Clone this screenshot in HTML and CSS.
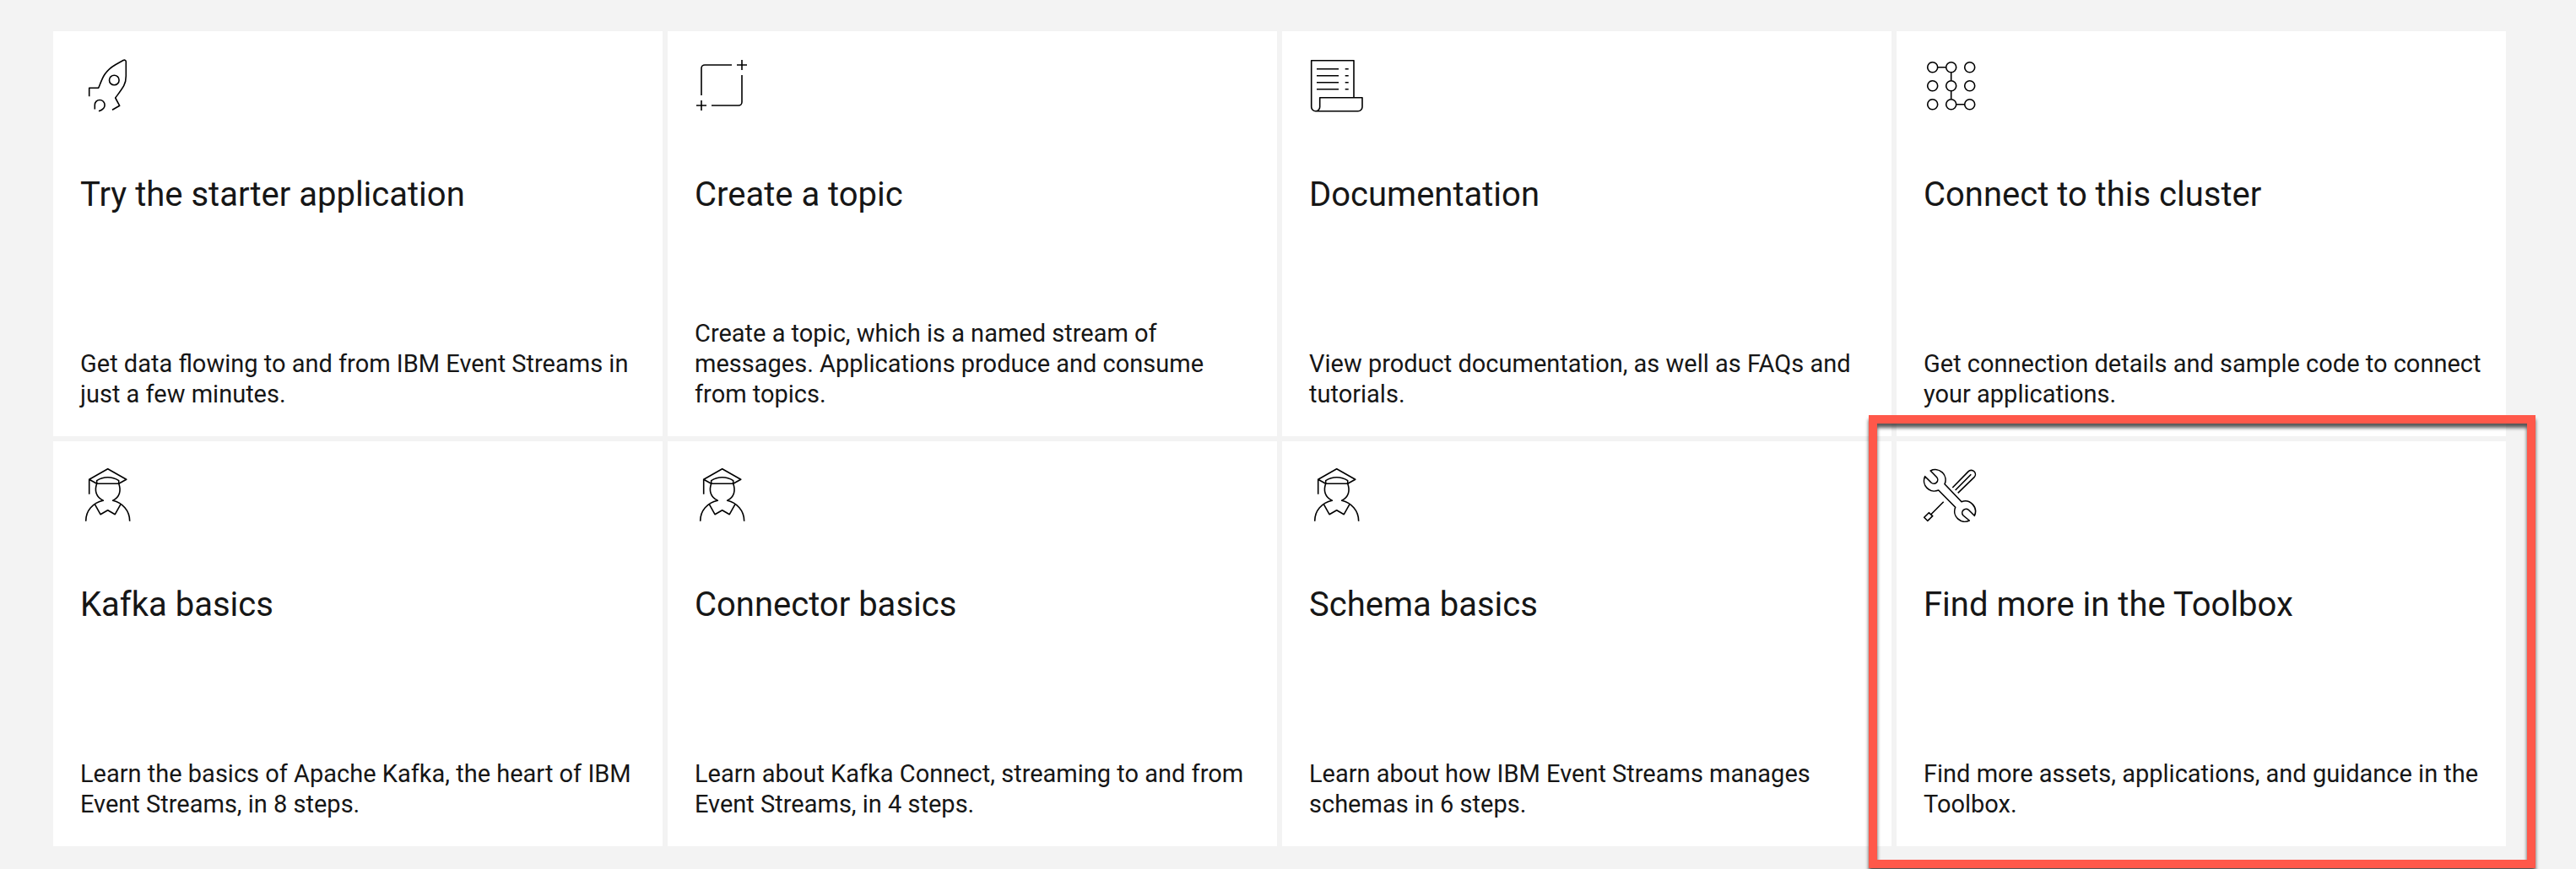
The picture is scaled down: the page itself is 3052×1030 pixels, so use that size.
FILE: index.html
```html
<!DOCTYPE html>
<html lang="en">
<head>
<meta charset="utf-8">
<title>Event Streams - Getting started</title>
<link rel="stylesheet" href="styles.css">
</head>
<body>
<svg class="symbols" aria-hidden="true">
  <symbol id="graduate" viewBox="0 0 64 64">
    <path d="M10.700 30.700V13.300L32.700.7l22 12.600-9 5h-26l-9-5"/>
    <path d="M19.700 18.300v-3.600c8-5.200 18-5.200 26 0v3.600"/>
    <path d="M19.700 18.300c-3 8-1 16 7.600 20C15 41 6.700 50 6.700 62.700"/>
    <path d="M45.700 18.300c3 8 1.300 16-7 20C50 41 58.700 50 58.700 62.700"/>
    <path d="M17.300 42.700l6.700 12 8.700-5 8.600 5 6.700-12"/>
  </symbol>
</svg>
<main class="tiles">
  <a class="tile" href="#starter">
    <svg class="icon" viewBox="0 0 64 64" aria-hidden="true">
      <path d="M10.700 45.300v-10h11C24.500 28.500 26 23.800 29 19.300c3.500-5.300 7-8.300 12.700-11.600l9.300-5.200c1.800-1 3.300 0 3.300 1.800V21c0 4.500-.6 8-2.600 11.700-3 5.300-6.300 9.300-10 14.300l5 9.300-8.700 5"/>
      <circle cx="40.300" cy="26" r="5.800"/>
      <path d="M17.300 60.500V55.500c0-3.500 2.600-6 5.900-6s5.900 2.600 5.900 6c0 4-3 6-7.100 7.300"/>
    </svg>
    <h2 class="title">Try the starter application</h2>
    <p class="text">Get data flowing to and from IBM Event Streams in just a few minutes.</p>
  </a>
  <a class="tile" href="#topic">
    <svg class="icon" viewBox="0 0 64 64" aria-hidden="true">
      <path d="M44 8H12a4 4 0 0 0-4 4v32M20 56h32a4 4 0 0 0 4-4V20M50 8h12M56 2v12M2 56h12M8 50v12"/>
    </svg>
    <h2 class="title">Create a topic</h2>
    <p class="text">Create a topic, which is a named stream of messages. Applications produce and consume from topics.</p>
  </a>
  <a class="tile" href="#docs">
    <svg class="icon" viewBox="0 0 64 64" aria-hidden="true">
      <path d="M53 46.700V2.700H2.700v55a5 5 0 0 0 10 0v-11H63v11a5 5 0 0 1-5 5H7.700M9 12.700h26M9 20.700h26M9 28.700h26M9 36.700h26M42.700 12.700h4M42.700 20.700h4M42.700 28.700h4M42.700 36.700h4"/>
    </svg>
    <h2 class="title">Documentation</h2>
    <p class="text">View product documentation, as well as FAQs and tutorials.</p>
  </a>
  <a class="tile" href="#connect">
    <svg class="icon" viewBox="0 0 64 64" aria-hidden="true">
      <circle cx="10.700" cy="10.700" r="6"/><circle cx="32.700" cy="10.700" r="6"/><circle cx="54.700" cy="10.700" r="6"/>
      <circle cx="10.700" cy="32.700" r="6"/><circle cx="32.700" cy="32.700" r="6"/><circle cx="54.700" cy="32.700" r="6"/>
      <circle cx="10.700" cy="54.700" r="6"/><circle cx="32.700" cy="54.700" r="6"/><circle cx="54.700" cy="54.700" r="6"/>
      <path d="M16.700 10.700h10M32.700 16.700v10M32.700 38.700v10M38.700 54.700h10"/>
    </svg>
    <h2 class="title">Connect to this cluster</h2>
    <p class="text">Get connection details and sample code to connect your applications.</p>
  </a>
  <a class="tile" href="#kafka">
    <svg class="icon" aria-hidden="true"><use href="#graduate"/></svg>
    <h2 class="title">Kafka basics</h2>
    <p class="text">Learn the basics of Apache Kafka, the heart of IBM Event Streams, in 8 steps.</p>
  </a>
  <a class="tile" href="#connector">
    <svg class="icon" aria-hidden="true"><use href="#graduate"/></svg>
    <h2 class="title">Connector basics</h2>
    <p class="text">Learn about Kafka Connect, streaming to and from Event Streams, in 4 steps.</p>
  </a>
  <a class="tile" href="#schema">
    <svg class="icon" aria-hidden="true"><use href="#graduate"/></svg>
    <h2 class="title">Schema basics</h2>
    <p class="text">Learn about how IBM Event Streams manages schemas in 6 steps.</p>
  </a>
  <a class="tile tile-highlighted" href="#toolbox">
    <svg class="icon" viewBox="0 0 64 64" aria-hidden="true">
      <path d="M8.200 3A12.200 12.200 0 0 1 25 18.700L45 39.700A12.200 12.200 0 0 1 60.300 56.300L53.500 49.500A4.600 4.600 0 0 0 47 56L54.300 62A12.200 12.200 0 0 1 37.700 46.300L17.700 26A12.200 12.200 0 0 1 1.700 9.700L9 17A4.600 4.600 0 0 0 15.500 10.500Z"/>
      <path d="M34.300 23L53 3.900a4.800 4.800 0 0 1 7 6.800L40.700 29.300M37.700 26L56.300 7.300M23.700 39.700L9 54.500M6.300 52.700l4.400 4-6 5.600-4-4Z"/>
    </svg>
    <h2 class="title">Find more in the Toolbox</h2>
    <p class="text">Find more assets, applications, and guidance in the Toolbox.</p>
  </a>
</main>
</body>
</html>
```
FILE: styles.css
```css
* {
  box-sizing: border-box;
}

body {
  margin: 0;
  background: #f3f3f3;
  color: #161616;
  font-family: Roboto, "Liberation Sans", sans-serif;
}

.symbols {
  position: absolute;
  width: 0;
  height: 0;
}

.tiles {
  display: grid;
  grid-template-columns: repeat(4, 1fr);
  grid-auto-rows: minmax(480px, auto);
  gap: 6px;
  padding: 37px 83px 27px 63px;
}

.tile {
  position: relative;
  display: flex;
  flex-direction: column;
  padding: 32px 20px 32px 32px;
  background: #fff;
  color: inherit;
  text-decoration: none;
}

/* Call-out frame drawn around the tile, over its neighbours */
.tile-highlighted::after {
  content: "";
  position: absolute;
  inset: -31px -35px -26px -33px;
  border: 10px solid #ff584a;
  filter: drop-shadow(0 5px 2px rgba(0, 0, 0, 0.65));
  pointer-events: none;
}

.icon {
  width: 64px;
  height: 64px;
  overflow: visible;
  fill: none;
  stroke: #000;
  stroke-width: 1.6px;
  stroke-linejoin: round;
}

.title {
  margin: 72px 0 32px;
  font-size: 40px;
  line-height: 52px;
  font-weight: 400;
}

.text {
  margin: auto 0 0;
  font-size: 29px;
  line-height: 36px;
}
```
